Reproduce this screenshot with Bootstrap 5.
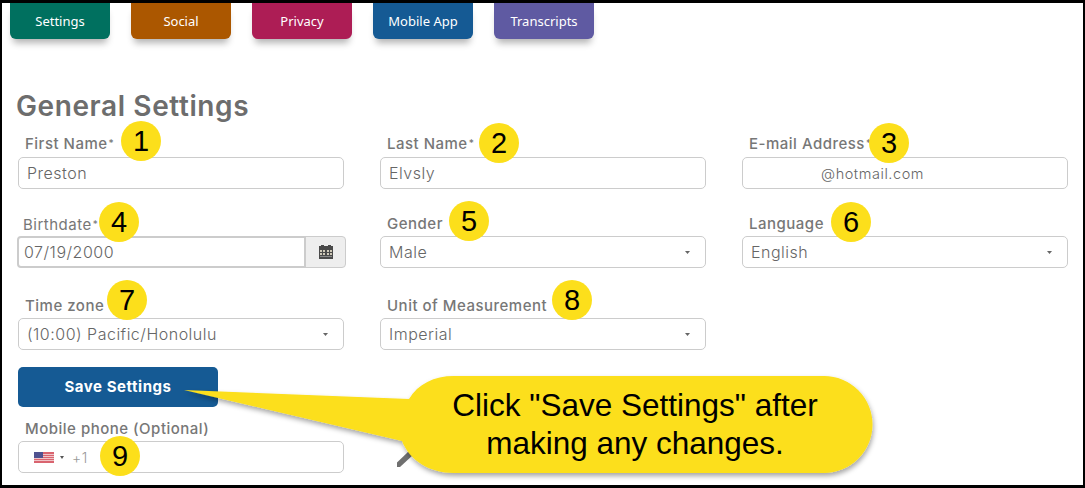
<!DOCTYPE html>
<html lang="en">
<head>
  <meta charset="UTF-8">
  <meta name="viewport" content="width=device-width, initial-scale=1">
  <title>General Settings</title>
  <link href="https://cdn.jsdelivr.net/npm/bootstrap@5.3.0/dist/css/bootstrap.min.css" rel="stylesheet">
  <style>
    html, body {
      height: 488px;
      overflow: hidden;
      background: #fff;
    }
    body {
      font-family: Inter, "Liberation Sans", sans-serif;
      color: #777;
    }
    .page-frame {
      position: relative;
      width: 1085px;
      height: 488px;
      border-style: solid;
      border-color: #000;
      border-width: 3px 2px 3px 2px;
      overflow: hidden;
    }
    .tab-row {
      gap: 21px;
      padding-left: 8px;
    }
    .tab-btn {
      width: 100px;
      height: 36px;
      padding-top: 2px;
      color: #fff;
      font-family: "Noto Sans", sans-serif;
      font-size: 13px;
      border-radius: 0 0 6px 6px;
      box-shadow: 0 7px 7px -3px rgba(0, 0, 0, .3);
    }
    .tab-green { background: #00705f; }
    .tab-orange { background: #ab5700; }
    .tab-pink { background: #ad1d55; }
    .tab-blue { background: #155a94; }
    .tab-purple { background: #5f5aa2; }
    .page-title {
      margin: 51px 0 0 14px;
      font-size: 28px;
      line-height: 32px;
      font-weight: 600;
      color: #6d6d6d;
      letter-spacing: .6px;
    }
    .form-cols {
      display: grid;
      grid-template-columns: repeat(3, 326px);
      column-gap: 36px;
      padding-left: 16px;
    }
    .row-one { margin-top: 12px; }
    .row-one .field-label { margin-bottom: 5px; }
    .row-two { margin-top: 26px; }
    .row-three { margin-top: 29px; }
    .field-label {
      display: block;
      height: 18px;
      margin-bottom: 3px;
      padding-left: 7px;
      font-size: 15px;
      line-height: 18px;
      font-weight: 500;
      letter-spacing: .5px;
      color: #777;
      white-space: nowrap;
    }
    .field-label.tight { padding-left: 5px; font-weight: 400; }
    .req-mark { font-size: 10px; vertical-align: 2px; margin-left: 1px; }
    .form-control.plain-input, .form-select.plain-input {
      height: 32px;
      padding: 0 8px;
      font-size: 16px;
      font-weight: 300;
      letter-spacing: .5px;
      color: #666;
      border-color: #ccc;
      border-radius: 5px;
      box-shadow: none;
    }
    .form-select.plain-input {
      background-image: url("data:image/svg+xml,%3Csvg xmlns='http://www.w3.org/2000/svg' viewBox='0 0 5 3'%3E%3Cpath fill='%23666' d='M0 0h5L2.500 3z'/%3E%3C/svg%3E");
      background-size: 5px 3px;
      background-position: right 15px center;
    }
    .form-control.mail-input {
      padding-left: 78px;
      font-size: 14.5px;
      letter-spacing: .55px;
    }
    .date-group {
      width: 329px;
      margin-left: -1px;
    }
    .form-control.date-input {
      height: 32px;
      padding: 0 5px;
      font-size: 16px;
      font-weight: 300;
      letter-spacing: .5px;
      color: #666;
      border: 2px solid #ccc;
      border-radius: 4px 0 0 4px;
      box-shadow: none;
    }
    .date-addon {
      width: 41px;
      height: 32px;
      padding: 0;
      justify-content: center;
      background: #eee;
      border-color: #ccc;
      border-radius: 0 4px 4px 0;
    }
    .save-btn {
      width: 200px;
      height: 40px;
      margin: 17px 0 0 16px;
      padding: 0;
      background: #155a94;
      border: 0;
      border-radius: 5px;
      color: #fff;
      font-size: 15px;
      font-weight: 700;
      letter-spacing: .55px;
    }
    .phone-row { margin-top: 13px; }
    .phone-box {
      height: 32px;
      padding: 0 0 0 15px;
      border-color: #ccc;
      border-radius: 5px;
    }
    .phone-caret {
      width: 0;
      height: 0;
      margin: 0 8px 0 6px;
      border-style: solid;
      border-width: 3px 2.5px 0 2.5px;
      border-color: #555 transparent transparent;
    }
    .phone-code { font-size: 14px; font-weight: 300; letter-spacing: .5px; color: #999; }
    .edit-icon { margin: 30px 0 0 17px; }
    .num-dot {
      position: absolute;
      width: 40px;
      height: 40px;
      display: flex;
      align-items: center;
      justify-content: center;
      border-radius: 50%;
      background: #fcdf1b;
      color: #000;
      font-family: "Liberation Sans", sans-serif;
      font-size: 29px;
      line-height: 1;
    }
    .callout-shape {
      position: absolute;
      left: 0;
      top: 0;
    }
    .callout-text {
      position: absolute;
      left: 399px;
      top: 372px;
      width: 468px;
      height: 97px;
      display: flex;
      align-items: center;
      justify-content: center;
      text-align: center;
      font-family: "Liberation Sans", sans-serif;
      font-size: 31.5px;
      line-height: 38px;
      color: #000;
    }
  </style>
</head>
<body>
  <div class="page-frame">
    <!-- Tabs -->
    <div class="d-flex tab-row">
      <div class="tab-btn tab-green d-flex align-items-center justify-content-center">Settings</div>
      <div class="tab-btn tab-orange d-flex align-items-center justify-content-center">Social</div>
      <div class="tab-btn tab-pink d-flex align-items-center justify-content-center">Privacy</div>
      <div class="tab-btn tab-blue d-flex align-items-center justify-content-center">Mobile App</div>
      <div class="tab-btn tab-purple d-flex align-items-center justify-content-center">Transcripts</div>
    </div>

    <h3 class="page-title">General Settings</h3>

    <div class="form-cols row-one">
      <div>
        <label class="field-label">First Name<span class="req-mark">*</span></label>
        <input type="text" class="form-control plain-input" value="Preston">
      </div>
      <div>
        <label class="field-label">Last Name<span class="req-mark">*</span></label>
        <input type="text" class="form-control plain-input" value="Elvsly">
      </div>
      <div>
        <label class="field-label">E-mail Address<span class="req-mark">*</span></label>
        <input type="text" class="form-control plain-input mail-input" value="@hotmail.com">
      </div>
    </div>

    <div class="form-cols row-two">
      <div>
        <label class="field-label tight">Birthdate<span class="req-mark">*</span></label>
        <div class="input-group flex-nowrap date-group">
          <input type="text" class="form-control date-input" value="07/19/2000">
          <span class="input-group-text date-addon">
            <svg width="14" height="14" viewBox="0 0 14 14">
              <path fill="#4a4a4a" d="M2 0h3v1h4V0h3v1h2v13H0V1h2z"/>
              <g fill="#cfc9b8">
                <rect x="1" y="5" width="2" height="2"/><rect x="4" y="5" width="2" height="2"/><rect x="8" y="5" width="2" height="2"/><rect x="11" y="5" width="2" height="2"/>
                <rect x="1" y="8" width="2" height="2"/><rect x="4" y="8" width="2" height="2"/><rect x="8" y="8" width="2" height="2"/><rect x="11" y="8" width="2" height="2"/>
              </g>
              <rect x="1" y="11" width="12" height="1" fill="#8b8b8b"/>
            </svg>
          </span>
        </div>
      </div>
      <div>
        <label class="field-label">Gender</label>
        <select class="form-select plain-input"><option>Male</option></select>
      </div>
      <div>
        <label class="field-label">Language</label>
        <select class="form-select plain-input"><option>English</option></select>
      </div>
    </div>

    <div class="form-cols row-three">
      <div>
        <label class="field-label">Time zone</label>
        <select class="form-select plain-input"><option>(10:00) Pacific/Honolulu</option></select>
      </div>
      <div>
        <label class="field-label">Unit of Measurement</label>
        <select class="form-select plain-input"><option>Imperial</option></select>
      </div>
    </div>

    <button type="button" class="btn save-btn d-block">Save Settings</button>

    <div class="form-cols phone-row">
      <div>
        <label class="field-label">Mobile phone (Optional)</label>
        <div class="form-control phone-box d-flex align-items-center">
          <svg width="20" height="11" viewBox="0 0 20 11">
            <rect width="20" height="11" fill="#d9646f"/>
            <rect y="2" width="20" height="1" fill="#efc4c8"/>
            <rect y="4" width="20" height="1" fill="#efc4c8"/>
            <rect y="6" width="20" height="1" fill="#efc4c8"/>
            <rect y="8" width="20" height="1" fill="#efc4c8"/>
            <rect width="9" height="6" fill="#4f5290"/>
          </svg>
          <span class="phone-caret"></span>
          <span class="phone-code">+1</span>
        </div>
      </div>
      <div>
        <svg class="edit-icon" width="16" height="17" viewBox="0 0 16 17">
          <path fill="#6f6f6f" d="M0 12.500L12 1l4 4L3 17H0z"/>
        </svg>
      </div>
    </div>

    <!-- Callout -->
    <svg class="callout-shape" width="1081" height="482" viewBox="0 0 1081 482">
      <defs>
        <filter id="calloutShadow" x="-10%" y="-20%" width="120%" height="150%">
          <feDropShadow dx="1" dy="3" stdDeviation="2.5" flood-color="#000" flood-opacity=".35"/>
        </filter>
      </defs>
      <path filter="url(#calloutShadow)" fill="#fcdf1b" d="M182 387 L407 396 C416 381 432 373 452 373 H822 A48.500 48.500 0 0 1 822 470 H452 C428 470 408 458 400 438 Z"/>
    </svg>
    <div class="callout-text">Click "Save Settings" after<br>making any changes.</div>

    <!-- Number markers -->
    <span class="num-dot" style="left:119px;top:118px">1</span>
    <span class="num-dot" style="left:477px;top:120px">2</span>
    <span class="num-dot" style="left:867px;top:120px">3</span>
    <span class="num-dot" style="left:97px;top:199px">4</span>
    <span class="num-dot" style="left:447px;top:198px">5</span>
    <span class="num-dot" style="left:829px;top:199px">6</span>
    <span class="num-dot" style="left:105px;top:277px">7</span>
    <span class="num-dot" style="left:550px;top:277px">8</span>
    <span class="num-dot" style="left:98px;top:433px">9</span>
  </div>
  <script src="https://cdn.jsdelivr.net/npm/bootstrap@5.3.0/dist/js/bootstrap.bundle.min.js"></script>
</body>
</html>
